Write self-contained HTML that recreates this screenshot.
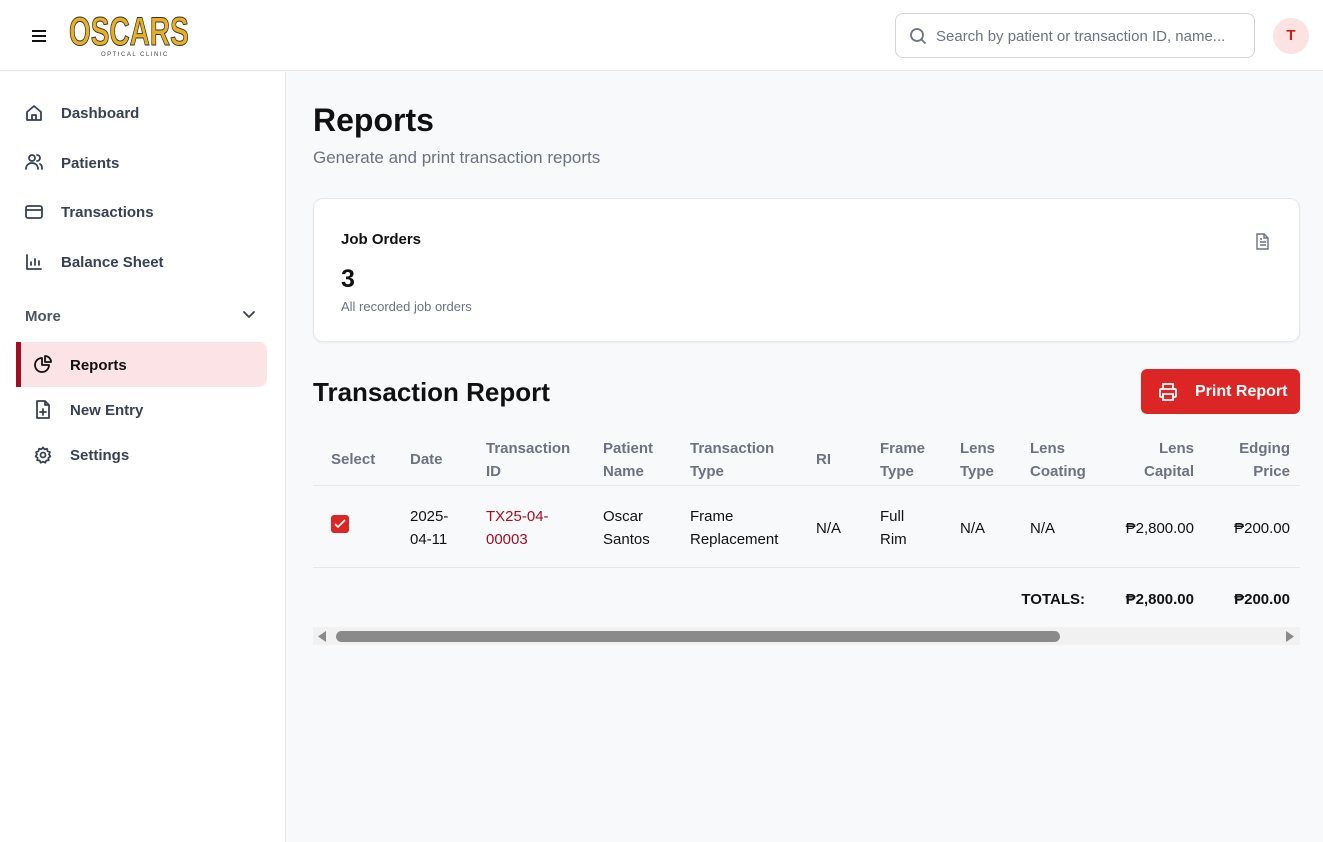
<!DOCTYPE html>
<html><head><meta charset="utf-8"><style>
*{box-sizing:border-box;margin:0;padding:0}
body{width:1323px;height:842px;position:relative;background:#f8f9fa;font-family:"Liberation Sans",sans-serif;color:#111;overflow:hidden}
.a{position:absolute;white-space:nowrap}
.top{position:absolute;left:0;top:0;width:1323px;height:71px;background:#fff;border-bottom:1px solid #e5e7eb}
.side{position:absolute;left:0;top:72px;width:286px;height:770px;background:#fff;border-right:1px solid #e5e7eb}
.nav{font-size:15px;color:#374151;font-weight:bold}
.ic{position:absolute;fill:none;stroke:#374151;stroke-width:1.8;stroke-linecap:round;stroke-linejoin:round}
.th{font-size:15px;color:#6b7280;font-weight:bold;line-height:23px}
.td{font-size:15px;color:#111;line-height:23px}
</style></head><body>
<div class="top"></div>
<svg class="a" style="left:31px;top:29px" width="16" height="14"><path d="M1 2h14M1 7h14M1 12h14" stroke="#111" stroke-width="2"/></svg>
<div class="a" style="left:69px;top:10px;font-size:40px;font-weight:bold;color:#e8b020;line-height:44px;-webkit-text-stroke:1px #333;transform:scaleX(0.7);transform-origin:0 0">OSCARS</div>
<div class="a" style="left:101px;top:52px;font-size:6px;letter-spacing:1.5px;color:#444">OPTICAL CLINIC</div>
<div class="a" style="left:895px;top:13px;width:360px;height:45px;border:1px solid #d1d5db;border-radius:8px;background:#fff"></div>
<svg class="a" style="left:909px;top:27px" width="18" height="18" fill="none" stroke="#6b7280" stroke-width="1.8"><circle cx="8" cy="8" r="6"/><path d="M12.5 12.5l4 4"/></svg>
<div class="a" style="left:936px;top:28px;font-size:15px;color:#6b7280">Search by patient or transaction ID, name...</div>
<div class="a" style="left:1273px;top:18px;width:36px;height:36px;border-radius:50%;background:#fde2e2;color:#c81e1e;font-weight:bold;font-size:15px;text-align:center;line-height:36px">T</div>

<div class="side"></div>
<svg class="ic" style="left:25px;top:104px" width="18" height="18"><path d="M2 8l7-6 7 6v8H2z M7 16v-5h4v5"/></svg>
<div class="a nav" style="left:61px;top:105px">Dashboard</div>
<svg class="ic" style="left:25px;top:153px" width="18" height="18"><circle cx="7" cy="5" r="3"/><path d="M1 16c0-4 3-6 6-6s6 2 6 6M12 2a3 3 0 010 6M15 11c2 1 2 3 2 5"/></svg>
<div class="a nav" style="left:61px;top:155px">Patients</div>
<svg class="ic" style="left:25px;top:204px" width="18" height="16"><rect x="1" y="2" width="16" height="12" rx="2"/><path d="M1 6h16"/></svg>
<div class="a nav" style="left:61px;top:204px">Transactions</div>
<svg class="ic" style="left:25px;top:253px" width="18" height="18"><path d="M2 2v14h14M6 12V9M10 12V6M14 12V8"/></svg>
<div class="a nav" style="left:61px;top:254px">Balance Sheet</div>
<div class="a" style="left:25px;top:308px;font-size:15px;color:#4b5563;font-weight:bold">More</div>
<svg class="ic" style="left:242px;top:310px" width="14" height="10"><path d="M2 2l5 5 5-5"/></svg>
<div class="a" style="left:16px;top:342px;width:251px;height:45px;background:#fbe3e6;border-radius:0 8px 8px 0;border-left:5px solid #a50d20"></div>
<svg class="ic" style="left:33px;top:355px;stroke:#111" width="20" height="20"><path d="M9 3a7 7 0 107 7H9z M12 1v6h6a6 6 0 00-6-6"/></svg>
<div class="a nav" style="left:70px;top:357px;color:#111">Reports</div>
<svg class="ic" style="left:34px;top:400px" width="18" height="19"><path d="M3 1h8l4 4v13H3z M11 1v4h4 M9 9v6M6 12h6"/></svg>
<div class="a nav" style="left:70px;top:402px">New Entry</div>
<svg class="ic" style="left:34px;top:446px" width="18" height="18"><circle cx="9" cy="9" r="2.5"/><path d="M9 1.5l1.6 1.8 2.4-.5.6 2.4 2.3.9-.9 2.3 1.4 2-2 1.4.3 2.4-2.4.3-1 2.2-2.3-1-2.3 1-1-2.2-2.4-.3.3-2.4-2-1.4 1.4-2-.9-2.3 2.3-.9.6-2.4 2.4.5z"/></svg>
<div class="a nav" style="left:70px;top:447px">Settings</div>

<div class="a" style="left:313px;top:102px;font-size:32px;font-weight:bold">Reports</div>
<div class="a" style="left:313px;top:148px;font-size:17px;color:#6b7280">Generate and print transaction reports</div>
<div class="a" style="left:313px;top:198px;width:987px;height:144px;background:#fff;border:1px solid #e5e7eb;border-radius:10px;box-shadow:0 1px 2px rgba(0,0,0,.05)"></div>
<div class="a" style="left:341px;top:231px;font-size:15px;font-weight:bold">Job Orders</div>
<svg class="a" style="left:1255px;top:233px" width="15" height="17" fill="none" stroke="#6b7280" stroke-width="1.4"><path d="M2 1h7l4 4v11H2z M9 1v4h4 M5 9h6M5 12h6M5 6h2"/></svg>
<div class="a" style="left:341px;top:265px;font-size:25px;font-weight:bold">3</div>
<div class="a" style="left:341px;top:299px;font-size:13px;color:#6b7280">All recorded job orders</div>

<div class="a" style="left:313px;top:377px;font-size:26px;font-weight:bold">Transaction Report</div>
<div class="a" style="left:1141px;top:369px;width:159px;height:45px;background:#dc2626;border-radius:6px"></div>
<svg class="a" style="left:1158px;top:382px" width="20" height="19" fill="none" stroke="#fff" stroke-width="1.8"><path d="M5 7V2h10v5M5 15H3a1 1 0 01-1-1V8a1 1 0 011-1h14a1 1 0 011 1v6a1 1 0 01-1 1h-2M5 12h10v6H5z"/></svg>
<div class="a" style="left:1195px;top:383px;font-size:16px;font-weight:bold;color:#fff">Print Report</div>

<div class="a th" style="left:331px;top:448px">Select</div>
<div class="a th" style="left:410px;top:448px">Date</div>
<div class="a th" style="left:486px;top:437px">Transaction<br>ID</div>
<div class="a th" style="left:603px;top:437px">Patient<br>Name</div>
<div class="a th" style="left:690px;top:437px">Transaction<br>Type</div>
<div class="a th" style="left:816px;top:448px">RI</div>
<div class="a th" style="left:880px;top:437px">Frame<br>Type</div>
<div class="a th" style="left:960px;top:437px">Lens<br>Type</div>
<div class="a th" style="left:1030px;top:437px">Lens<br>Coating</div>
<div class="a th" style="left:1094px;top:437px;width:100px;text-align:right">Lens<br>Capital</div>
<div class="a th" style="left:1200px;top:437px;width:90px;text-align:right">Edging<br>Price</div>
<div class="a" style="left:313px;top:485px;width:987px;height:1px;background:#e5e7eb"></div>
<div class="a" style="left:331px;top:515px;width:18px;height:18px;background:#dc2626;border-radius:3px"></div>
<svg class="a" style="left:334px;top:519px" width="12" height="10" fill="none" stroke="#fff" stroke-width="1.6"><path d="M1 5l3 3 7-7"/></svg>
<div class="a td" style="left:410px;top:505px">2025-<br>04-11</div>
<div class="a td" style="left:486px;top:505px;color:#a50d20">TX25-04-<br>00003</div>
<div class="a td" style="left:603px;top:505px">Oscar<br>Santos</div>
<div class="a td" style="left:690px;top:505px">Frame<br>Replacement</div>
<div class="a td" style="left:816px;top:517px">N/A</div>
<div class="a td" style="left:880px;top:505px">Full<br>Rim</div>
<div class="a td" style="left:960px;top:517px">N/A</div>
<div class="a td" style="left:1030px;top:517px">N/A</div>
<div class="a td" style="left:1094px;top:517px;width:100px;text-align:right">₱2,800.00</div>
<div class="a td" style="left:1200px;top:517px;width:90px;text-align:right">₱200.00</div>
<div class="a" style="left:313px;top:567px;width:987px;height:1px;background:#e5e7eb"></div>
<div class="a td" style="left:985px;top:588px;width:100px;text-align:right;font-weight:bold">TOTALS:</div>
<div class="a td" style="left:1094px;top:588px;width:100px;text-align:right;font-weight:bold">₱2,800.00</div>
<div class="a td" style="left:1200px;top:588px;width:90px;text-align:right;font-weight:bold">₱200.00</div>
<div class="a" style="left:313px;top:627px;width:987px;height:18px;background:#f1f1f1"></div>
<svg class="a" style="left:317px;top:631px" width="10" height="11"><path d="M9 0v11L1 5.5z" fill="#8a8a8a"/></svg>
<svg class="a" style="left:1285px;top:631px" width="10" height="11"><path d="M1 0v11L9 5.5z" fill="#8a8a8a"/></svg>
<div class="a" style="left:336px;top:631px;width:724px;height:11px;background:#8a8a8a;border-radius:6px"></div>
</body></html>
